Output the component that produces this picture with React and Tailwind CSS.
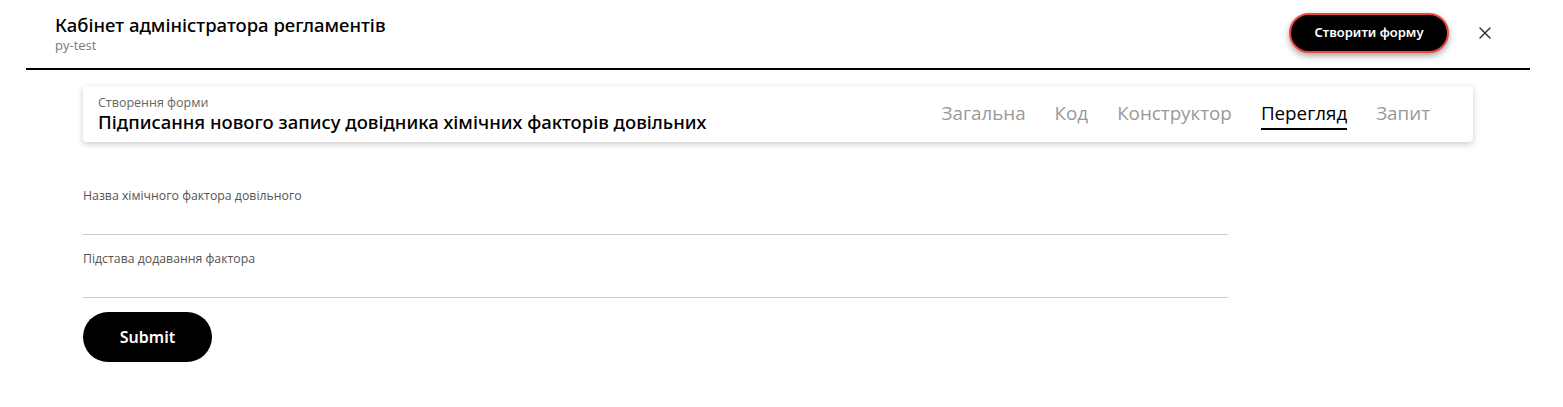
import { X } from 'lucide-react'

const TABS = ['Загальна', 'Код', 'Конструктор', 'Перегляд', 'Запит']
const ACTIVE = 'Перегляд'

const FIELDS = ['Назва хімічного фактора довільного', 'Підстава додавання фактора']

export default function App() {
  return (
    <div className="min-h-[407px] bg-white font-['Open_Sans',Arial,sans-serif]">
      <header className="ml-[26px] mr-[33px] flex h-[70px] items-center justify-between border-b-2 border-black pl-[29px] pr-[35px]">
        <div className="leading-none">
          <div className="font-['Noto_Sans',sans-serif] text-[18.5px] font-medium text-black">
            Кабінет адміністратора регламентів
          </div>
          <div className="mt-[4px] text-[13px] text-[#777]">py-test</div>
        </div>
        <div className="-mt-[2px] flex items-center gap-[26px]">
          <button className="h-[40px] w-[160px] rounded-full border-2 border-[#ef4444] bg-black font-['Noto_Sans',sans-serif] text-[13px] font-semibold text-white shadow-[0_3px_6px_rgba(0,0,0,0.35)]">
            Створити форму
          </button>
          <X className="h-[20px] w-[20px] text-[#333]" strokeWidth={1.8} />
        </div>
      </header>

      <div className="px-[83px] pt-[16px]">
        <div className="mr-[7px] flex h-[56px] items-center justify-between rounded-[4px] bg-white pl-[15px] pr-[43px] shadow-[0_2px_6px_rgba(0,0,0,0.22)]">
          <div className="leading-none">
            <div className="text-[12.5px] text-[#666]">Створення форми</div>
            <div className="mt-[3px] font-['Noto_Sans',sans-serif] text-[18.5px] font-medium text-black">
              Підписання нового запису довідника хімічних факторів довільних
            </div>
          </div>
          <nav className="flex items-center gap-[29px]">
            {TABS.map(t => (
              <div
                key={t}
                className={
                  t === ACTIVE
                    ? 'border-b-2 border-black pb-[4px] pt-[3px] text-[18.8px] leading-[22px] text-black'
                    : 'pb-[6px] pt-[3px] text-[18.8px] leading-[22px] text-[#999]'
                }
              >
                {t}
              </div>
            ))}
          </nav>
        </div>

        <form className="mt-[47px] w-[1145px]" onSubmit={e => e.preventDefault()}>
          {FIELDS.map(f => (
            <div key={f} className="mb-[17px] border-b border-[#ccc] pb-[31px]">
              <div className="text-[12.3px] leading-[14px] text-[#555]">{f}</div>
            </div>
          ))}
          <button
            type="submit"
            className="mt-[-3px] h-[50px] w-[129px] rounded-full bg-black font-['Noto_Sans',sans-serif] text-[16px] font-semibold text-white"
          >
            Submit
          </button>
        </form>
      </div>
    </div>
  )
}
